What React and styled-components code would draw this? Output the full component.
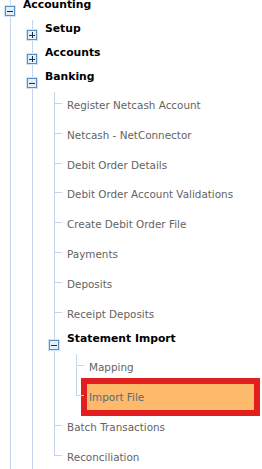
import React from 'react'
import styled, { createGlobalStyle } from 'styled-components'

// Tree data: "more" marks a node whose siblings continue below the visible area
const tree = {
	label: 'Accounting',
	open: true,
	more: true,
	children: [
		{ label: 'Setup', open: false, children: [] },
		{ label: 'Accounts', open: false, children: [] },
		{
			label: 'Banking',
			open: true,
			more: true,
			children: [
				{ label: 'Register Netcash Account' },
				{ label: 'Netcash - NetConnector' },
				{ label: 'Debit Order Details' },
				{ label: 'Debit Order Account Validations' },
				{ label: 'Create Debit Order File' },
				{ label: 'Payments' },
				{ label: 'Deposits' },
				{ label: 'Receipt Deposits' },
				{
					label: 'Statement Import',
					open: true,
					children: [
						{ label: 'Mapping' },
						{ label: 'Import File', selected: true },
					],
				},
				{ label: 'Batch Transactions' },
				{ label: 'Reconciliation' },
			],
		},
	],
}

const LINE = '#c4d4ea'
const BRANCH_H = 24
const LEAF_H = 29.8
const LEAF_TICK = 11

function TreeNode({ node, last }) {
	const isBranch = Array.isArray(node.children)
	const tick = isBranch ? 15.5 : LEAF_TICK

	return (
		<Item $last={last && !node.more} $tick={tick} $leaf={!isBranch}>
			{isBranch ? (
				<BranchRow>
					<Toggle $open={node.open} />
					<BranchLabel>{node.label}</BranchLabel>
				</BranchRow>
			) : (
				<LeafRow>
					<LeafLabel $selected={node.selected}>{node.label}</LeafLabel>
				</LeafRow>
			)}

			{isBranch && node.open && node.children.length > 0 && (
				<List $indent={22}>
					{node.children.map((child, i) => (
						<TreeNode
							key={child.label}
							node={child}
							last={i === node.children.length - 1}
						/>
					))}
				</List>
			)}
		</Item>
	)
}

export default function App() {
	return (
		<>
			<GlobalStyle />
			<Tree>
				<List $indent={0}>
					<TreeNode node={tree} last={false} />
				</List>
			</Tree>
		</>
	)
}

// Styled components
const GlobalStyle = createGlobalStyle`
	html, body {
		margin: 0;
		padding: 0;
		background: #fff;
		overflow: hidden;
	}
	body {
		font-family: "DejaVu Sans", Verdana, sans-serif;
	}
`

const Tree = styled.nav`
	margin-top: -4px;
	width: 262px;
	height: 473px;
	overflow: hidden;
`

const List = styled.ul`
	list-style: none;
	margin: 0;
	padding: 0 0 0 ${(p) => p.$indent}px;
`

const Item = styled.li`
	position: relative;

	/* vertical connector of this sibling group */
	&::before {
		content: '';
		position: absolute;
		left: 10px;
		top: 0;
		border-left: 1px solid ${LINE};
		${(p) => (p.$last ? `height: ${p.$tick}px;` : 'bottom: 0;')}
	}

	/* horizontal tick into a leaf */
	&::after {
		content: '';
		display: ${(p) => (p.$leaf ? 'block' : 'none')};
		position: absolute;
		left: 10px;
		top: ${(p) => p.$tick}px;
		width: 8px;
		border-top: 1px solid ${LINE};
	}
`

const BranchRow = styled.div`
	display: flex;
	align-items: flex-start;
	height: ${BRANCH_H}px;
`

const Toggle = styled.span`
	position: relative;
	z-index: 1;
	box-sizing: border-box;
	flex: none;
	width: 10px;
	height: 10px;
	margin: 10px 8px 0 5px;
	border: 1px solid #5b8fc4;
	background: #e4eef8;
	box-shadow: 0 0 0 1px #d3e3f3;

	&::before,
	&::after {
		content: '';
		position: absolute;
		background: #1c2f4a;
	}
	&::before {
		left: 1px;
		top: 3.5px;
		width: 6px;
		height: 1px;
	}
	&::after {
		display: ${(p) => (p.$open ? 'none' : 'block')};
		left: 3.5px;
		top: 1px;
		width: 1px;
		height: 6px;
	}
`

const BranchLabel = styled.span`
	font-size: 10.8px;
	font-weight: bold;
	line-height: 18px;
	color: #000;
	white-space: nowrap;
`

const LeafLabel = styled.span`
	margin-left: 21px;
	padding: 0 2px;
	height: 26px;
	line-height: 26px;
	font-size: 10.4px;
	white-space: nowrap;
	color: ${(p) => (p.$selected ? '#566a80' : '#636363')};
	background: ${(p) => (p.$selected ? '#fdba6a' : 'transparent')};
	outline: ${(p) => (p.$selected ? '6px solid #e31e1e' : 'none')};
	${(p) => p.$selected && 'flex: 1; margin-right: 8px;'}
`

const LeafRow = styled.div`
	display: flex;
	align-items: flex-start;
	height: ${LEAF_H}px;
`
